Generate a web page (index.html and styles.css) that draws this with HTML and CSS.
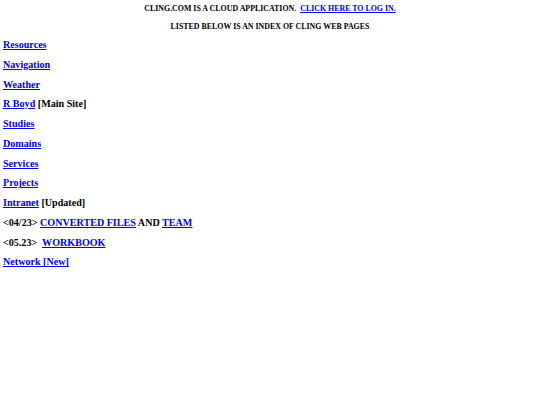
FILE: index.html
```html
<!DOCTYPE html>
<html>
<head>
<meta charset="utf-8">
<link rel="stylesheet" href="styles.css">
</head>
<body>
<div class="top">
  <p class="head">CLING.COM IS A CLOUD APPLICATION.&nbsp; <a href="#">CLICK HERE TO LOG IN.</a></p>
  <p class="head">LISTED BELOW IS AN INDEX OF CLING WEB PAGES</p>
</div>
<div class="list">
  <p class="item"><a href="#">Resources</a></p>
  <p class="item"><a href="#">Navigation</a></p>
  <p class="item"><a href="#">Weather</a></p>
  <p class="item"><a href="#">R Boyd</a> [Main Site]</p>
  <p class="item"><a href="#">Studies</a></p>
  <p class="item"><a href="#">Domains</a></p>
  <p class="item"><a href="#">Services</a></p>
  <p class="item"><a href="#">Projects</a></p>
  <p class="item"><a href="#">Intranet</a> [Updated]</p>
  <p class="item">&lt;04/23&gt; <a href="#">CONVERTED FILES</a> AND <a href="#">TEAM</a></p>
  <p class="item">&lt;05.23&gt;&nbsp; <a href="#">WORKBOOK</a></p>
  <p class="item"><a href="#">Network [New]</a></p>
</div>
</body>
</html>
```
FILE: styles.css
```css
html, body {
  margin: 0;
  padding: 0;
  background: #ffffff;
}
body {
  font-family: "Liberation Serif", "Times New Roman", serif;
  font-weight: bold;
  color: #000000;
  padding: 0 3px;
}
a {
  color: #0000ee;
  text-decoration: underline;
}
.top {
  display: flex;
  flex-direction: column;
  gap: 4px;
  padding-top: 1.5px;
}
.head {
  margin: 0;
  text-align: center;
  font-size: 7.9px;
  line-height: 14px;
}
.list {
  display: flex;
  flex-direction: column;
  padding-top: 1.5px;
}
.item {
  margin: 0;
  font-size: 10.1px;
  line-height: 19.77px;
}
```
